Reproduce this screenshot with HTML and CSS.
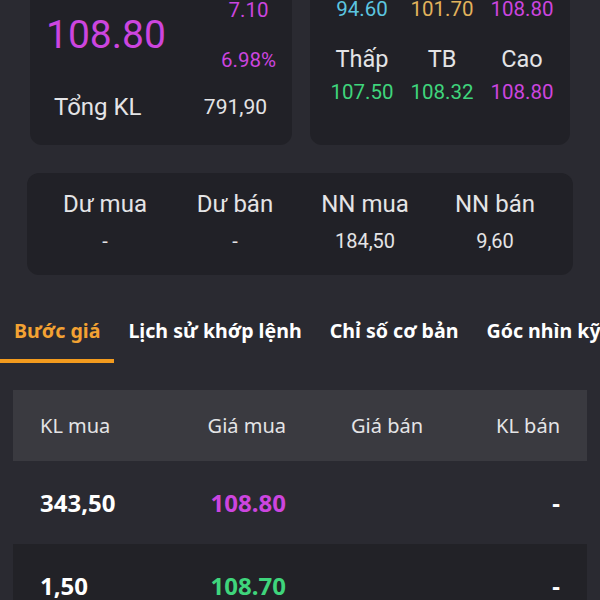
FILE: index.html
```html
<!DOCTYPE html>
<html lang="vi">
<head>
    <meta charset="UTF-8">
    <title>Bước giá</title>
    <link rel="stylesheet" href="styles.css">
</head>
<body>
    <div class="summary">
        <div class="card price-card">
            <div class="price-top">
                <div class="price-big purple">108.80</div>
                <div class="change">
                    <span class="purple">7.10</span>
                    <span class="purple">6.98%</span>
                </div>
            </div>
            <div class="volume">
                <span>Tổng KL</span>
                <span class="volume-value">791,90</span>
            </div>
        </div>

        <div class="card range-card">
            <span class="label">Sàn</span>
            <span class="label">TC</span>
            <span class="label">Trần</span>
            <span class="cyan">94.60</span>
            <span class="orange">101.70</span>
            <span class="purple">108.80</span>
            <span class="label">Thấp</span>
            <span class="label">TB</span>
            <span class="label">Cao</span>
            <span class="green">107.50</span>
            <span class="green">108.32</span>
            <span class="purple">108.80</span>
        </div>
    </div>

    <div class="card stats">
        <span>Dư mua</span>
        <span>Dư bán</span>
        <span>NN mua</span>
        <span>NN bán</span>
        <span class="stat-value">-</span>
        <span class="stat-value">-</span>
        <span class="stat-value">184,50</span>
        <span class="stat-value">9,60</span>
    </div>

    <div class="tabs">
        <div class="tab active">Bước giá</div>
        <div class="tab">Lịch sử khớp lệnh</div>
        <div class="tab">Chỉ số cơ bản</div>
        <div class="tab">Góc nhìn kỹ thuật</div>
    </div>

    <div class="book">
        <div class="book-row book-head">
            <span>KL mua</span>
            <span>Giá mua</span>
            <span>Giá bán</span>
            <span>KL bán</span>
        </div>
        <div class="book-row">
            <span>343,50</span>
            <span class="purple">108.80</span>
            <span></span>
            <span>-</span>
        </div>
        <div class="book-row dark">
            <span>1,50</span>
            <span class="green">108.70</span>
            <span></span>
            <span>-</span>
        </div>
    </div>
</body>
</html>
```

FILE: styles.css
```css
html, body {
    height: 100%;
    overflow: hidden;
}
body {
    margin: 0;
    background: #2a2a31;
    color: #e4e4e6;
    font-family: Roboto, "Noto Sans", sans-serif;
}

.purple { color: #cc45df; }
.green { color: #3fd57c; }
.cyan { color: #5cc6e0; }
.orange { color: #e2b35c; }

.card {
    background: #212127;
    border-radius: 12px;
}

/* top cards */
.summary {
    display: grid;
    grid-template-columns: 262px 260px;
    column-gap: 18px;
    padding: 0 30px;
    margin-top: -50px;
}
.price-card {
    padding: 45px 16px 23px 18px;
}
.price-top {
    display: flex;
    justify-content: space-between;
    align-items: center;
}
.price-big {
    font-size: 39px;
    line-height: 40px;
    margin-left: -2px;
}
.change {
    display: flex;
    flex-direction: column;
    align-items: center;
    gap: 20px;
    font-size: 20.5px;
    line-height: 30px;
}
.volume {
    display: flex;
    justify-content: space-between;
    margin-top: 17px;
    padding: 0 9px 0 6px;
    font-size: 24px;
    line-height: 30px;
}
.volume-value {
    font-size: 21px;
}

.range-card {
    display: grid;
    grid-template-columns: repeat(3, 80px);
    grid-template-rows: 33px 33px 50px 33px;
    align-items: end;
    padding: 10px 18px 36px 12px;
    font-size: 20.5px;
    line-height: 33px;
    text-align: center;
}
.range-card .label {
    font-size: 23.5px;
}

/* remaining volumes */
.stats {
    display: grid;
    grid-template-columns: repeat(4, 130px);
    margin: 28px 27px 0 27px;
    padding: 16px 13px 19px;
    row-gap: 7px;
    text-align: center;
    font-size: 24px;
    line-height: 30px;
}
.stat-value {
    font-size: 20px;
}

/* tabs */
.tabs {
    display: flex;
    margin-top: 42px;
    overflow: hidden;
    font-family: "Noto Sans", sans-serif;
    font-weight: bold;
    font-size: 19.6px;
    line-height: 27px;
    white-space: nowrap;
    color: #ffffff;
}
.tab {
    flex-shrink: 0;
    padding: 0 14px 15px;
    border-bottom: 4px solid transparent;
}
.tab.active {
    color: #f3a233;
    border-bottom-color: #f39b1e;
}

/* order book */
.book {
    margin: 27px 13px 0;
    font-family: "Noto Sans", sans-serif;
}
.book-row {
    display: grid;
    grid-template-columns: repeat(4, 1fr);
    align-items: center;
    height: 83px;
    padding: 0 27px;
    font-size: 24px;
    font-weight: bold;
    color: #ffffff;
}
.book-row span:nth-child(2) {
    text-align: right;
    padding-right: 14px;
}
.book-row span:nth-child(3) {
    padding-left: 51px;
}
.book-row span:nth-child(4) {
    text-align: right;
}
.book-head {
    height: 71px;
    background: #3a3a40;
    font-size: 20px;
    font-weight: normal;
    color: #e4e4e6;
}
.book-row.dark {
    background: #222227;
}
```
